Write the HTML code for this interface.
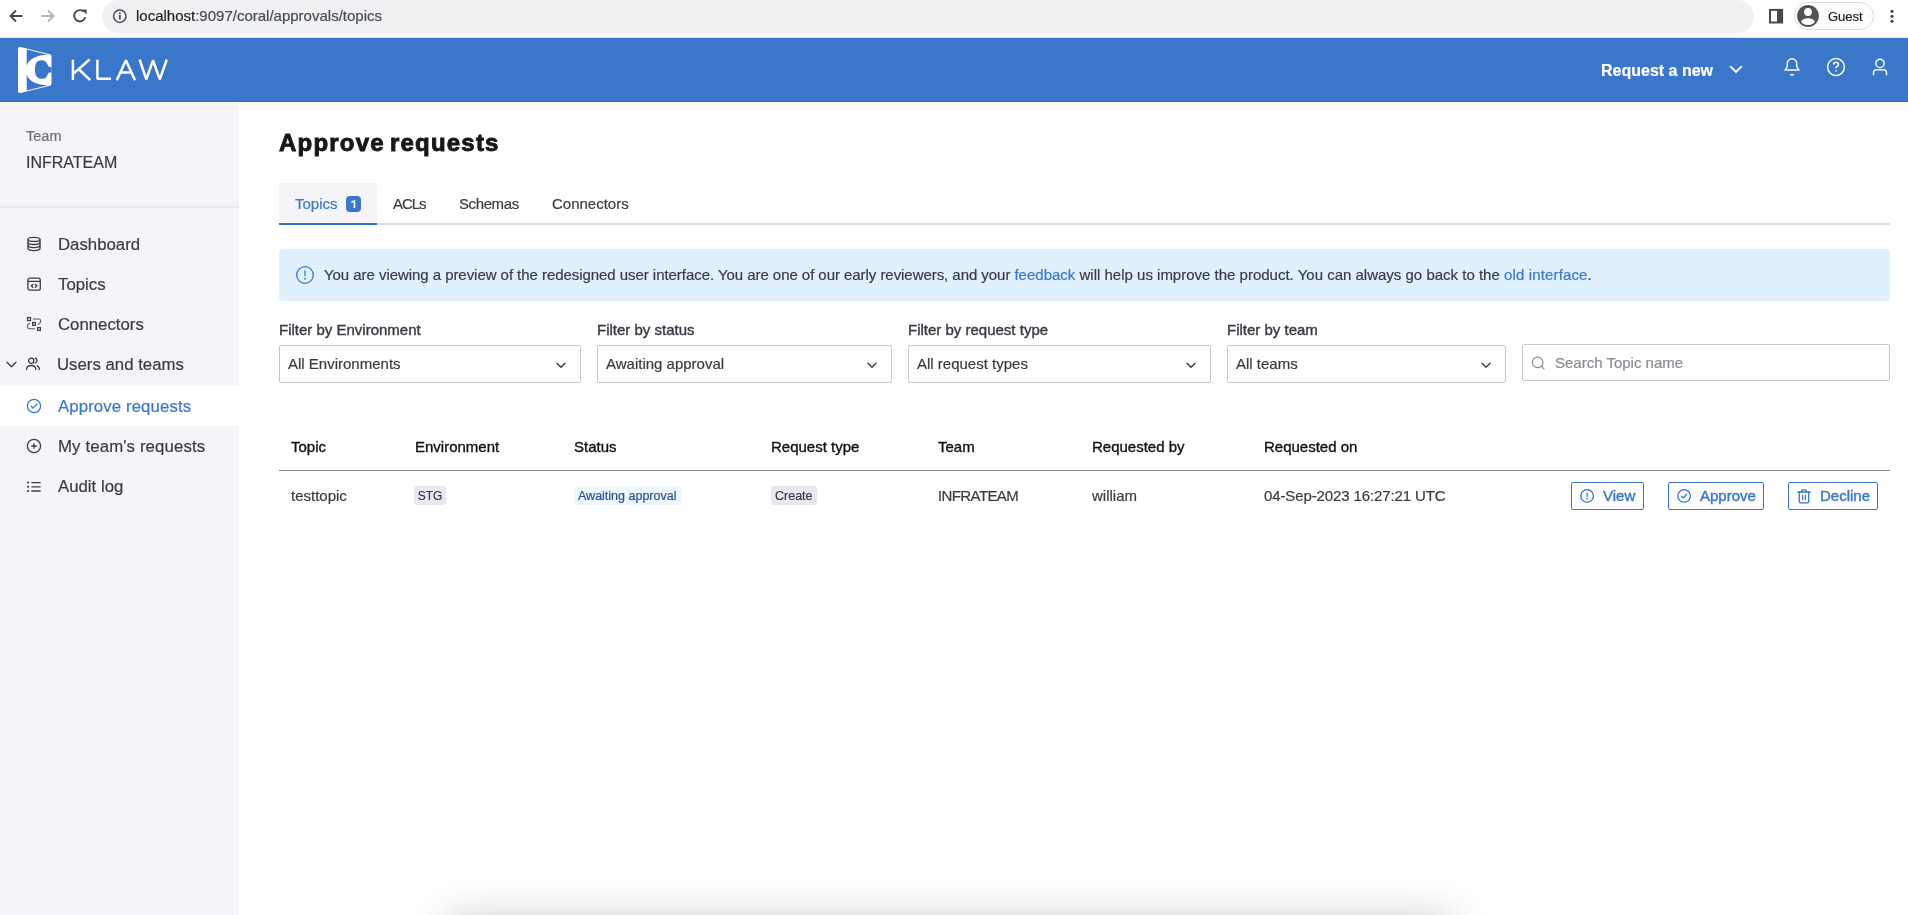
<!DOCTYPE html>
<html><head><meta charset="utf-8">
<style>
*{box-sizing:border-box;margin:0;padding:0}
html,body{width:1908px;height:915px;overflow:hidden;background:#fff;font-family:"Liberation Sans",sans-serif;color:#3a3a44;-webkit-text-stroke-width:0.2px}
.abs{position:absolute}
svg{display:block}
#chrome{position:absolute;left:0;top:0;width:1908px;height:38px;background:#fff;border-bottom:1px solid #e3e3e3}
#pill{position:absolute;left:102px;top:0px;width:1652px;height:33px;background:#f0f1f3;border-radius:16.5px}
#url{position:absolute;left:136px;top:7px;font-size:15px;color:#474a4f;white-space:pre;line-height:18px}
#url b{font-weight:400;color:#1f1f1f}
#guest{position:absolute;left:1794px;top:2px;width:80px;height:28px;border:1px solid #dadce0;border-radius:14px}
#guest span{position:absolute;left:33px;top:6px;font-size:13px;color:#1f1f1f}
#hdr{position:absolute;left:0;top:38px;width:1908px;height:64px;background:#3a76c9;border-bottom:1px solid #2c6ac4}
#side{position:absolute;left:0;top:103px;width:239px;height:812px;background:#f5f5f9}
.nav{position:absolute;left:0;width:239px;height:40px}
.nav .t{position:absolute;left:58px;top:12px;font-size:16.8px;line-height:18px;white-space:pre;color:#3a3a44}
.nav svg{position:absolute;left:26px;top:13px}
.nav.act{background:#fff}
.nav.act .t{color:#3a77cc}

.tx{position:absolute;white-space:pre;line-height:18px}
.sel{position:absolute;top:345px;height:38px;border:1px solid #c5c5cc;border-radius:2px;background:#fff}
.sel .v{position:absolute;left:8px;top:9px;font-size:15px;color:#3a3a44;line-height:18px;white-space:pre}
.sel svg{position:absolute;right:14px;top:16px}
.lbl{position:absolute;top:321px;font-size:15px;color:#3a3a44;line-height:18px;white-space:pre;-webkit-text-stroke:0.4px #3a3a44}
.th{position:absolute;top:438px;font-size:15px;color:#101016;line-height:18px;white-space:pre;-webkit-text-stroke:0.35px #101016}
.td{position:absolute;top:487px;font-size:15px;color:#3a3a44;line-height:18px;white-space:pre}
.badge{position:absolute;top:486px;height:19px;border-radius:2px;background:#e8e8ee;font-size:12.5px;line-height:21px;color:#3a3a44;white-space:pre}
.btn{position:absolute;top:482px;height:28px;border:1px solid #3a76c9;border-radius:2px;background:#fff}
.btn span{position:absolute;top:4px;font-size:15px;line-height:18px;color:#3a76c9;white-space:pre;-webkit-text-stroke:0.4px #3a76c9}
.btn svg{position:absolute;left:8px;top:6px}
</style></head><body><div id="root" style="position:absolute;left:0;top:0;width:1908px;height:915px;overflow:hidden;will-change:transform">

<div id="chrome">
  <div id="pill"></div>
  <svg class="abs" style="left:8px;top:8px" width="16" height="16" viewBox="0 0 16 16"><path d="M14.5 8H2.5M8 2.5L2.5 8 8 13.5" fill="none" stroke="#474a4f" stroke-width="1.9"/></svg>
  <svg class="abs" style="left:40px;top:8px" width="16" height="16" viewBox="0 0 16 16"><path d="M1.5 8H13.5M8 2.5L13.5 8 8 13.5" fill="none" stroke="#b4b6b9" stroke-width="1.9"/></svg>
  <svg class="abs" style="left:72px;top:8px" width="16" height="16" viewBox="0 0 16 16"><path d="M13.2 9.2A5.6 5.6 0 1 1 11.6 3.6" fill="none" stroke="#474a4f" stroke-width="1.9"/><path d="M9.6 1.4L14.6 1.4 14.6 6.4Z" fill="#474a4f"/></svg>
  <svg class="abs" style="left:112px;top:9px" width="16" height="15" viewBox="0 0 16 15"><circle cx="7.8" cy="7.2" r="6.2" fill="none" stroke="#474a4f" stroke-width="1.5"/><rect x="7" y="6" width="1.7" height="4.6" fill="#474a4f"/><rect x="7" y="3.4" width="1.7" height="1.7" fill="#474a4f"/></svg>
  <div id="url"><b>localhost</b>:9097/coral/approvals/topics</div>
  <svg class="abs" style="left:1768px;top:8px" width="16" height="16" viewBox="0 0 16 16"><rect x="2" y="1.9" width="12.1" height="12.6" fill="none" stroke="#474a4f" stroke-width="2"/><rect x="9" y="1.5" width="5.5" height="13.4" fill="#474a4f"/></svg>
  <div id="guest"><span>Guest</span></div>
  <svg class="abs" style="left:1797px;top:5px" width="22" height="22" viewBox="0 0 22 22"><circle cx="11" cy="11" r="10.9" fill="#4f5257"/><circle cx="11" cy="7" r="3.9" fill="#fff"/><ellipse cx="11" cy="16.6" rx="6.6" ry="3.4" fill="#fff"/></svg>
  <svg class="abs" style="left:1888px;top:8px" width="8" height="16" viewBox="0 0 8 16"><circle cx="4" cy="3.3" r="1.6" fill="#474a4f"/><circle cx="4" cy="8.3" r="1.6" fill="#474a4f"/><circle cx="4" cy="13.3" r="1.6" fill="#474a4f"/></svg>
</div>

<div id="hdr">
  <svg class="abs" style="left:17px;top:8px" width="36" height="48" viewBox="0 0 36 48">
    <path d="M3.5 1 L33 8.3 Q34.5 8.8 34.5 10.5 L34.5 37.5 Q34.5 39.2 33 39.7 L3.5 47 Q1 47.6 1 45 L1 3 Q1 0.4 3.5 1Z" fill="#fff"/>
    <path d="M9.7 3.6 L31 8.7 C20 9 12 12.5 9.7 19.5Z" fill="#3a76c9"/>
    <path d="M9.7 44.4 L31 39.3 C20 39 12 35.5 9.7 28.5Z" fill="#3a76c9"/>
    <path d="M28.7 15.6 C25 13.5 21 14 19.2 17 C17.5 19.5 17.5 27.5 19.5 30.2 C21.5 33 25.5 33.5 28.7 32 L32 26.5 L34.6 26.5 L34.6 21 L32 21 Z" fill="#3a76c9"/>
  </svg>
  <svg class="abs" style="left:70px;top:20px" width="100" height="24" viewBox="70 58 100 24" fill="none" stroke="#fff" stroke-width="2.5" stroke-linejoin="bevel">
    <path d="M72.9 59.7V80M89.6 59.5L73.8 73.4M78.6 69L90.2 80.2"/>
    <path d="M97.4 59.7V78.8H111"/>
    <path d="M116.8 80.3L125.9 60.3 135 80.3M119.8 72.6H131.8"/>
    <path d="M139.6 59.5L146.3 79.4 153 60.4 159.8 79.4 166.8 59.5"/>
  </svg>
  <div class="abs" style="left:1601px;top:24px;font-size:16px;font-weight:700;color:#fff;line-height:18px;white-space:pre">Request a new</div>
  <svg class="abs" style="left:1728px;top:26px" width="16" height="10" viewBox="0 0 16 10"><path d="M2.2 2.2L8 8 13.8 2.2" fill="none" stroke="#fff" stroke-width="1.8"/></svg>
  <svg class="abs" style="left:1782px;top:19px" width="20" height="20" viewBox="0 0 20 20" fill="none" stroke="#fff" stroke-width="1.5"><path d="M3 13 Q5 11 5.3 9 L5.3 6.5 A4.7 4.7 0 0 1 14.7 6.5 L14.7 9 Q15 11 17 13 Z" stroke-linejoin="round"/><path d="M8.2 17.2 Q10 18.9 11.8 17.2"/></svg>
  <svg class="abs" style="left:1826px;top:19px" width="20" height="20" viewBox="0 0 20 20" fill="none" stroke="#fff" stroke-width="1.5"><circle cx="10" cy="10" r="8.4"/><path d="M7.6 7.6 Q7.6 5.2 10 5.2 Q12.4 5.2 12.4 7.4 Q12.4 9 10.6 9.7 Q10 10 10 11.3"/><path d="M10 13.2V14.4" stroke-width="1.7"/></svg>
  <svg class="abs" style="left:1870px;top:19px" width="20" height="20" viewBox="0 0 20 20" fill="none" stroke="#fff" stroke-width="1.5"><circle cx="10" cy="6.4" r="4.1"/><path d="M3.5 18.2 V16 Q3.5 12.8 6.7 12.8 H13.3 Q16.5 12.8 16.5 16 V18.2"/></svg>
</div>

<div id="side">
  <div class="abs" style="left:26px;top:25px;font-size:14.5px;color:#6c6c78;line-height:16px">Team</div>
  <div class="abs" style="left:26px;top:51px;font-size:16px;color:#3a3a44;line-height:18px">INFRATEAM</div>
  <div class="abs" style="left:0;top:103px;width:239px;height:2px;background:#e8e8ee"></div>
  <div class="nav" style="top:121px"><span class="t">Dashboard</span><svg style="left:26px;top:12px" width="16" height="16" viewBox="0 0 16 16" fill="none" stroke="#3a3a44" stroke-width="1.3" stroke-linecap="round" stroke-linejoin="round"><ellipse cx="8" cy="3.4" rx="6" ry="2"/><path d="M2 3.4V12.6C2 13.7 4.7 14.6 8 14.6S14 13.7 14 12.6V3.4"/><path d="M2 6.5C2 7.6 4.7 8.5 8 8.5S14 7.6 14 6.5M2 9.6C2 10.7 4.7 11.6 8 11.6S14 10.7 14 9.6"/></svg></div>
  <div class="nav" style="top:161px"><span class="t">Topics</span><svg style="left:26px;top:12px" width="16" height="16" viewBox="0 0 16 16" fill="none" stroke="#3a3a44" stroke-width="1.3" stroke-linecap="round" stroke-linejoin="round"><rect x="1.9" y="2.2" width="12.4" height="12" rx="2"/><path d="M2 5.3H14"/><path d="M6.8 8.4L5.3 9.8 6.8 11.2M9.4 8.4L10.9 9.8 9.4 11.2"/></svg></div>
  <div class="nav" style="top:201px"><span class="t">Connectors</span><svg style="left:26px;top:12px" width="16" height="16" viewBox="0 0 16 16" fill="none" stroke="#3a3a44" stroke-width="1.3" stroke-linecap="round" stroke-linejoin="round"><rect x="1.5" y="1.5" width="3" height="3" stroke-width="1.25" stroke-linejoin="miter"/><rect x="6.6" y="6.5" width="2.8" height="2.8" stroke-width="1.25" stroke-linejoin="miter"/><rect x="11.6" y="11.6" width="2.8" height="2.8" stroke-width="1.25" stroke-linejoin="miter"/><path d="M7.3 3H13Q14.7 3 14.7 5Q14.7 7 12.5 8.3" stroke-width="1.1" stroke="#5a5a66"/><path d="M3.6 7.3Q1.4 8.5 1.4 10.3Q1.4 12.8 3.5 12.8H8.6" stroke-width="1.1" stroke="#5a5a66"/></svg></div>
  <div class="nav" style="top:241px"><span class="t" style="left:57px">Users and teams</span><svg style="left:25px;top:12px" width="16" height="16" viewBox="0 0 16 16" fill="none" stroke="#3a3a44" stroke-width="1.3" stroke-linecap="round" stroke-linejoin="round"><circle cx="6.2" cy="4.7" r="2.6"/><path d="M1.6 13.4C1.6 10.9 3.6 9.5 6.2 9.5S10.8 10.9 10.8 13.4"/><path d="M10.2 2.2C11.5 2.6 12 3.6 12 4.6S11.5 6.5 10.2 6.9"/><path d="M12.3 9.8C13.6 10.4 14.4 11.6 14.4 13.4"/></svg><svg style="left:5px;top:16px" width="13" height="9" viewBox="0 0 13 9" fill="none" stroke="#3a3a44" stroke-width="1.3" stroke-linecap="round" stroke-linejoin="round"><path d="M2 2.2L6.5 6.7 11 2.2"/></svg></div>
  <div class="nav act" style="top:283px"><span class="t" style="letter-spacing:0.1px">Approve requests</span><svg style="left:26px;top:12px" width="16" height="16" viewBox="0 0 16 16" fill="none" stroke="#3a77cc" stroke-width="1.3" stroke-linecap="round" stroke-linejoin="round"><circle cx="8" cy="8" r="6.6"/><path d="M5.2 8.3L7.1 10.1 10.8 6.2"/></svg></div>
  <div class="nav" style="top:323px"><span class="t" style="letter-spacing:0.13px">My team's requests</span><svg style="left:26px;top:12px" width="16" height="16" viewBox="0 0 16 16" fill="none" stroke="#3a3a44" stroke-width="1.3" stroke-linecap="round" stroke-linejoin="round"><circle cx="8" cy="8" r="6.6"/><path d="M8 5.7V10.3M5.7 8H10.3"/></svg></div>
  <div class="nav" style="top:363px"><span class="t">Audit log</span><svg style="left:26px;top:13px" width="16" height="16" viewBox="0 0 16 16" fill="none" stroke="#3a3a44" stroke-width="1.3" stroke-linecap="round" stroke-linejoin="round"><path d="M5.8 3.6H14.2M5.8 7.8H14.2M5.8 12H14.2"/><path d="M2 3.6H2.2M2 7.8H2.2M2 12H2.2" stroke-width="2"/></svg></div>
</div>


<div id="main">
  <div class="tx" style="left:279px;top:130px;font-size:24px;line-height:25px;font-weight:700;color:#16161c;letter-spacing:1.2px;word-spacing:-2.6px;-webkit-text-stroke:0.9px #16161c">Approve requests</div>
  <div class="abs" style="left:279px;top:183px;width:98px;height:39px;background:#f5f5f9"></div>
  <div class="abs" style="left:279px;top:223px;width:98px;height:2px;background:#3670c3"></div>
  <div class="abs" style="left:377px;top:223px;width:1513px;height:2px;background:#dcdce2"></div>
  <div class="tx" style="left:295px;top:195px;font-size:15px;color:#3a77cc">Topics</div>
  <div class="abs" style="left:346px;top:196px;width:15px;height:16px;border-radius:4px;background:#3a76c9"><svg width="15" height="16" viewBox="0 0 15 16"><path d="M7.6 4.2H9.3V12.1H7.6Z M5.2 5.6L7.9 4.2 8.3 5.8 5.5 7Z" fill="#fff"/></svg></div>
  <div class="tx" style="left:393px;top:195px;font-size:15px;color:#3a3a44;letter-spacing:-1.1px">ACLs</div>
  <div class="tx" style="left:459px;top:195px;font-size:15px;color:#3a3a44;letter-spacing:-0.4px">Schemas</div>
  <div class="tx" style="left:552px;top:195px;font-size:15px;color:#3a3a44">Connectors</div>

  <div class="abs" style="left:279px;top:249px;width:1611px;height:52px;background:#e0f1fd;border-radius:4px"></div>
  <svg class="abs" style="left:295px;top:265px" width="20" height="20" viewBox="0 0 20 20" fill="none" stroke="#3a76c9" stroke-width="1.3" stroke-linecap="round" stroke-linejoin="round"><circle cx="10" cy="10" r="8.3"/><path d="M10 6V10.6"/><path d="M10 13.6V13.8" stroke-width="1.8"/></svg>
  <div class="tx" style="left:324px;top:266px;font-size:15px;color:#3a3a44"><span style="letter-spacing:-0.05px">You are viewing a preview of the redesigned user interface. You are one of our early reviewers, and your </span><span style="color:#3a77cc">feedback</span> will help us improve the product. You can always go back to the <span style="color:#3a77cc;letter-spacing:0.15px">old interface</span>.</div>

  <div class="lbl" style="left:279px">Filter by Environment</div>
  <div class="lbl" style="left:597px">Filter by status</div>
  <div class="lbl" style="left:908px">Filter by request type</div>
  <div class="lbl" style="left:1227px">Filter by team</div>
  <div class="sel" style="left:279px;width:302px"><span class="v">All Environments</span><svg width="10" height="7" viewBox="0 0 10 7"><path d="M1 1.3L5 5.3 9 1.3" fill="none" stroke="#3a3a44" stroke-width="1.4" stroke-linecap="round" stroke-linejoin="round"/></svg></div>
  <div class="sel" style="left:597px;width:295px"><span class="v">Awaiting approval</span><svg width="10" height="7" viewBox="0 0 10 7"><path d="M1 1.3L5 5.3 9 1.3" fill="none" stroke="#3a3a44" stroke-width="1.4" stroke-linecap="round" stroke-linejoin="round"/></svg></div>
  <div class="sel" style="left:908px;width:303px"><span class="v">All request types</span><svg width="10" height="7" viewBox="0 0 10 7"><path d="M1 1.3L5 5.3 9 1.3" fill="none" stroke="#3a3a44" stroke-width="1.4" stroke-linecap="round" stroke-linejoin="round"/></svg></div>
  <div class="sel" style="left:1227px;width:279px"><span class="v">All teams</span><svg width="10" height="7" viewBox="0 0 10 7"><path d="M1 1.3L5 5.3 9 1.3" fill="none" stroke="#3a3a44" stroke-width="1.4" stroke-linecap="round" stroke-linejoin="round"/></svg></div>
  <div class="sel" style="left:1522px;top:344px;width:368px;height:37px"><svg style="left:7px;top:10px;right:auto" width="17" height="17" viewBox="0 0 17 17" fill="none" stroke="#8a8a96" stroke-width="1.2" stroke-linecap="round"><circle cx="7.6" cy="7.4" r="5.3"/><path d="M11.4 11.3L14 13.9"/></svg><span class="v" style="left:32px;top:9px;color:#8a8a96">Search Topic name</span></div>

  <div class="th" style="left:291px">Topic</div>
  <div class="th" style="left:415px">Environment</div>
  <div class="th" style="left:574px">Status</div>
  <div class="th" style="left:771px">Request type</div>
  <div class="th" style="left:938px">Team</div>
  <div class="th" style="left:1092px">Requested by</div>
  <div class="th" style="left:1264px">Requested on</div>
  <div class="abs" style="left:279px;top:470px;width:1611px;height:1px;background:#868694"></div>

  <div class="td" style="left:291px">testtopic</div>
  <div class="badge" style="left:414px;width:32px;text-align:center;font-size:12px">STG</div>
  <div class="badge" style="left:574px;width:108px;background:#eef7fe;color:#284f9c;padding-left:4px">Awaiting approval</div>
  <div class="badge" style="left:771px;width:46px;padding-left:4px">Create</div>
  <div class="td" style="left:938px;letter-spacing:-0.6px">INFRATEAM</div>
  <div class="td" style="left:1092px">william</div>
  <div class="td" style="left:1264px;letter-spacing:-0.12px">04-Sep-2023 16:27:21 UTC</div>

  <div class="btn" style="left:1571px;width:73px"><svg width="16" height="16" viewBox="0 0 16 16" fill="none" stroke="#3a76c9" stroke-width="1.3" stroke-linecap="round" stroke-linejoin="round"><circle cx="7.1" cy="6.9" r="6.3"/><path d="M7.1 4.1V7.5"/><path d="M7.1 9.8V10" stroke-width="1.6"/></svg><span style="left:31px">View</span></div>
  <div class="btn" style="left:1668px;width:96px"><svg width="16" height="16" viewBox="0 0 16 16" fill="none" stroke="#3a76c9" stroke-width="1.3" stroke-linecap="round" stroke-linejoin="round"><circle cx="7.1" cy="6.9" r="6.3"/><path d="M4.5 7.2L6.3 9 9.7 5.3"/></svg><span style="left:31px">Approve</span></div>
  <div class="btn" style="left:1788px;width:90px"><svg width="16" height="16" viewBox="0 0 16 16" fill="none" stroke="#3a76c9" stroke-width="1.3" stroke-linecap="round" stroke-linejoin="round"><path d="M0.8 3H13.3"/><path d="M4.6 3V1.9Q4.6 0.8 5.7 0.8H8.3Q9.4 0.8 9.4 1.9V3"/><path d="M2.3 3V12Q2.3 13.9 4.2 13.9H9.8Q11.7 13.9 11.7 12V3"/><path d="M5.6 6.2V10.6M8.4 6.2V10.6"/></svg><span style="left:31px">Decline</span></div>
</div>
<div class="abs" style="left:448px;top:917px;width:1004px;height:80px;background:#fff;box-shadow:0 0 40px rgba(0,0,0,0.2)"></div>
</div></body></html>
